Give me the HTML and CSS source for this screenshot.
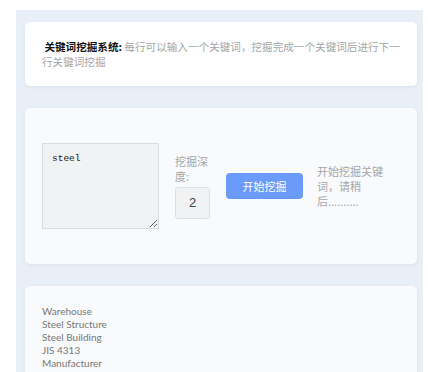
FILE: index.html
```html
<!DOCTYPE html>
<html lang="zh-CN">
<head>
  <meta charset="UTF-8" />
  <meta name="viewport" content="width=device-width, initial-scale=1.0"/>
  <title>关键词挖掘系统</title>
  <link rel="stylesheet" href="styles.css">
</head>
<body>
  <div class="page">
    <div class="card intro">
      <p>&nbsp;<b>关键词挖掘系统:</b> 每行可以输入一个关键词，挖掘完成一个关键词后进行下一行关键词挖掘</p>
    </div>

    <div class="card soft">
      <div class="controls">
        <textarea class="keywords">steel</textarea>
        <div class="depth">
          <label for="depth">挖掘深度:</label>
          <input type="text" id="depth" value="2" />
        </div>
        <button class="start">开始挖掘</button>
        <div class="status">开始挖掘关键词，请稍后..........</div>
      </div>
    </div>

    <div class="card soft results">
      <div>Warehouse</div>
      <div>Steel Structure</div>
      <div>Steel Building</div>
      <div>JIS 4313</div>
      <div>Manufacturer</div>
      <div>Steel Pipe</div>
    </div>
  </div>
</body>
</html>
```

FILE: styles.css
```css
:root {
  --bg: #e9eff7;
  --card: #fff;
  --card-soft: #f9fafc;
  --primary: #6a9bfb;
  --muted: #a6a6a6;
  --text: #333;
}

* {
  box-sizing: border-box;
}

body {
  margin: 0;
  font-family: "Noto Sans CJK SC", "Noto Sans", sans-serif;
  color: var(--text);
  background: #fff;
  height: 372px;
  overflow: hidden;
}

.page {
  margin: 10px 5px 0 16px;
  padding: 12px 6px 12px 9px;
  background: var(--bg);
  min-height: 400px;
}

.card {
  background: var(--card);
  border-radius: 5px;
  box-shadow: 0 1px 4px rgba(0, 0, 0, 0.06);
  margin-bottom: 22px;
  padding: 17px;
}

.soft {
  background: var(--card-soft);
}

.intro {
  padding-right: 12px;
}

.intro p {
  margin: 0;
  font-size: 10.6px;
  line-height: 15px;
  color: var(--muted);
}

.intro b {
  color: #111;
}

.controls {
  display: flex;
  align-items: center;
  padding: 18px 0;
}

.keywords {
  width: 117px;
  height: 86px;
  padding: 9px 9px;
  background: #f1f2f4;
  border: 1px solid #dcdcdc;
  border-radius: 0;
  font-family: "Liberation Mono", monospace;
  font-size: 9.5px;
  color: #222;
  margin-right: 16px;
}

.depth {
  width: 36px;
  display: flex;
  flex-direction: column;
  margin-right: 15px;
}

.depth label {
  font-size: 11px;
  line-height: 15px;
  color: var(--muted);
  margin-bottom: 3px;
}

.depth input {
  width: 35px;
  height: 32px;
  border: 1px solid #e0e0e0;
  border-radius: 3px;
  background: #f1f2f4;
  text-align: center;
  font-family: "Liberation Sans", sans-serif;
  font-size: 13px;
  color: #444;
  padding: 0;
}

.start {
  width: 77px;
  height: 26px;
  background: var(--primary);
  color: #fff;
  border: none;
  border-radius: 4px;
  font-family: inherit;
  font-size: 11px;
  cursor: pointer;
  margin-right: 14px;
}

.status {
  width: 67px;
  font-size: 11px;
  line-height: 15px;
  color: var(--muted);
  word-break: break-all;
}

.results {
  font-family: Lato, sans-serif;
  font-size: 10px;
  line-height: 13px;
  color: #777;
  padding-top: 19px;
}
```
